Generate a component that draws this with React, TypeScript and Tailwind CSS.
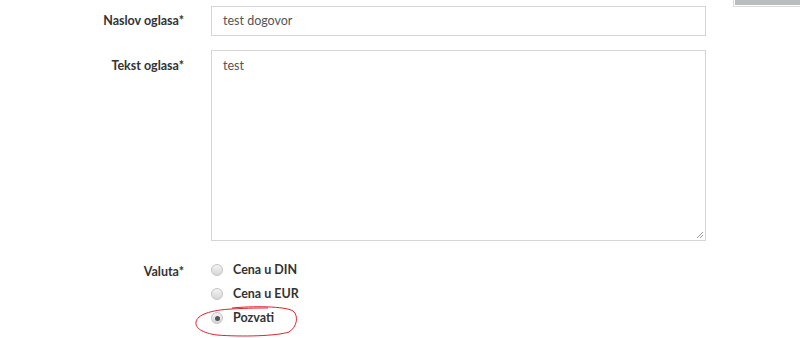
import React from 'react';

const labelCls = "w-[184px] shrink-0 text-right text-[12.5px] font-bold text-[#333]";

const Radio: React.FC<{ label: string; checked?: boolean }> = ({ label, checked }) => (
  <div className="flex items-center h-[24px]">
    <span className="w-[12px] h-[12px] rounded-full border border-[#c4c4c4] bg-gradient-to-b from-[#f4f4f4] to-[#d6d6d6] flex items-center justify-center">
      {checked && <span className="w-[5px] h-[5px] rounded-full bg-[#555]" />}
    </span>
    <span className="ml-[10px] text-[12.5px] font-bold text-[#333]">{label}</span>
  </div>
);

export default function App() {
  return (
    <div className="relative w-[800px] h-[338px] bg-white overflow-hidden" style={{ fontFamily: 'Lato, "Open Sans", sans-serif' }}>
      <div className="absolute right-0 top-0 w-[67px] h-[7px] border-l border-b border-[#dcdcdc] bg-white pl-[1px] pb-[1px]">
        <div className="w-full h-full bg-[#b9bdbd]" />
      </div>

      <div className="pt-[6px] flex flex-col">
        <div className="flex items-center gap-[27px]">
          <div className={labelCls}>Naslov oglasa*</div>
          <div className="w-[495px] h-[30px] border border-[#d5d5d5] flex items-center px-[11px] text-[12.5px] text-[#555]">test dogovor</div>
        </div>

        <div className="flex items-start gap-[27px] mt-[14px]">
          <div className={`${labelCls} pt-[7px]`}>Tekst oglasa*</div>
          <div className="relative w-[495px] h-[191px] border border-[#d5d5d5] px-[11px] pt-[6px] text-[12.5px] text-[#555]">
            test
            <svg className="absolute right-[1px] bottom-[1px]" width="8" height="8" viewBox="0 0 8 8">
              <line x1="1" y1="7" x2="7" y2="1" stroke="#999" strokeWidth="1" />
              <line x1="4" y1="7" x2="7" y2="4" stroke="#999" strokeWidth="1" />
            </svg>
          </div>
        </div>

        <div className="flex items-start gap-[27px] mt-[17px]">
          <div className={`${labelCls} pt-[5px]`}>Valuta*</div>
          <div className="flex flex-col">
            <Radio label="Cena u DIN" />
            <Radio label="Cena u EUR" />
            <Radio label="Pozvati" checked />
          </div>
        </div>
      </div>

      <svg className="absolute left-[192px] top-[305px]" width="108" height="33" viewBox="0 0 108 33">
        <path d="M40 3 C60 1, 93 1, 101 6 C107 11, 105 22, 97 27 C85 31, 50 32, 25 30 C10 28, 3 23, 4 17 C5 10, 18 5, 40 4 C55 3, 70 3, 76 3" fill="none" stroke="#e0202a" strokeWidth="1" />
      </svg>
    </div>
  );
}
